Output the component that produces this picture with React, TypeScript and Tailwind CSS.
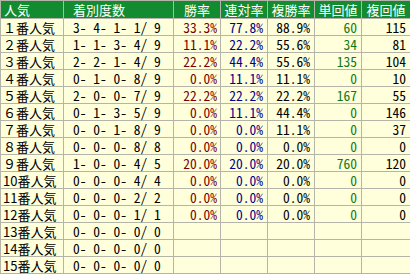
const rows: [string, string, string, string, string, string, string][] = [
  ['１番人気', '3- 4- 1- 1/ 9', '33.3%', '77.8%', '88.9%', '60', '115'],
  ['２番人気', '1- 1- 3- 4/ 9', '11.1%', '22.2%', '55.6%', '34', '81'],
  ['３番人気', '2- 2- 1- 4/ 9', '22.2%', '44.4%', '55.6%', '135', '104'],
  ['４番人気', '0- 1- 0- 8/ 9', '0.0%', '11.1%', '11.1%', '0', '10'],
  ['５番人気', '2- 0- 0- 7/ 9', '22.2%', '22.2%', '22.2%', '167', '55'],
  ['６番人気', '0- 1- 3- 5/ 9', '0.0%', '11.1%', '44.4%', '0', '146'],
  ['７番人気', '0- 0- 1- 8/ 9', '0.0%', '0.0%', '11.1%', '0', '37'],
  ['８番人気', '0- 0- 0- 8/ 8', '0.0%', '0.0%', '0.0%', '0', '0'],
  ['９番人気', '1- 0- 0- 4/ 5', '20.0%', '20.0%', '20.0%', '760', '120'],
  ['10番人気', '0- 0- 0- 4/ 4', '0.0%', '0.0%', '0.0%', '0', '0'],
  ['11番人気', '0- 0- 0- 2/ 2', '0.0%', '0.0%', '0.0%', '0', '0'],
  ['12番人気', '0- 0- 0- 1/ 1', '0.0%', '0.0%', '0.0%', '0', '0'],
  ['13番人気', '0- 0- 0- 0/ 0', '', '', '', '', ''],
  ['14番人気', '0- 0- 0- 0/ 0', '', '', '', '', ''],
  ['15番人気', '0- 0- 0- 0/ 0', '', '', '', '', ''],
];

const th = 'border border-[#b4b4a8] font-normal h-[18px] p-0 leading-[15px]';
const td = 'border border-[#b4b4a8] h-[17px] p-0 leading-[15px] whitespace-pre';
// half-width digits like a Japanese gothic font
const num = "text-[13.5px] [font-feature-settings:'hwid']";

export default function App() {
  return (
    <div className="w-[410px] h-[275px] bg-white overflow-hidden">
      <table className="w-[410px] border-collapse table-fixed text-[13px] text-black [font-family:'Noto_Sans_CJK_JP',sans-serif]">
        <colgroup>
          <col className="w-[63px]" />
          <col className="w-[110px]" />
          <col className="w-[47px]" />
          <col className="w-[47px]" />
          <col className="w-[47px]" />
          <col className="w-[47px]" />
          <col className="w-[49px]" />
        </colgroup>
        <thead>
          <tr className="bg-[#138b30] text-white">
            <th className={`${th} text-left pl-[3px]`}>人気</th>
            <th className={`${th} text-left pl-[9px]`}>着別度数</th>
            <th className={`${th} text-center`}>勝率</th>
            <th className={`${th} text-center`}>連対率</th>
            <th className={`${th} text-center`}>複勝率</th>
            <th className={`${th} text-center`}>単回値</th>
            <th className={`${th} text-center`}>複回値</th>
          </tr>
        </thead>
        <tbody className="bg-[#ffffdc]">
          {rows.map((r) => (
            <tr key={r[0]}>
              <td className={`${td} text-left pl-[2px]`}>{r[0]}</td>
              <td className={`${td} ${num} text-left pl-[9px]`}>{r[1]}</td>
              <td className={`${td} ${num} text-right pr-[3px] text-[#7a0000]`}>{r[2]}</td>
              <td className={`${td} ${num} text-right pr-[4px] text-[#000088]`}>{r[3]}</td>
              <td className={`${td} ${num} text-right pr-[4px]`}>{r[4]}</td>
              <td className={`${td} ${num} text-right pr-[4px] text-[#127a12]`}>{r[5]}</td>
              <td className={`${td} ${num} text-right pr-[4px]`}>{r[6]}</td>
            </tr>
          ))}
        </tbody>
      </table>
    </div>
  );
}
